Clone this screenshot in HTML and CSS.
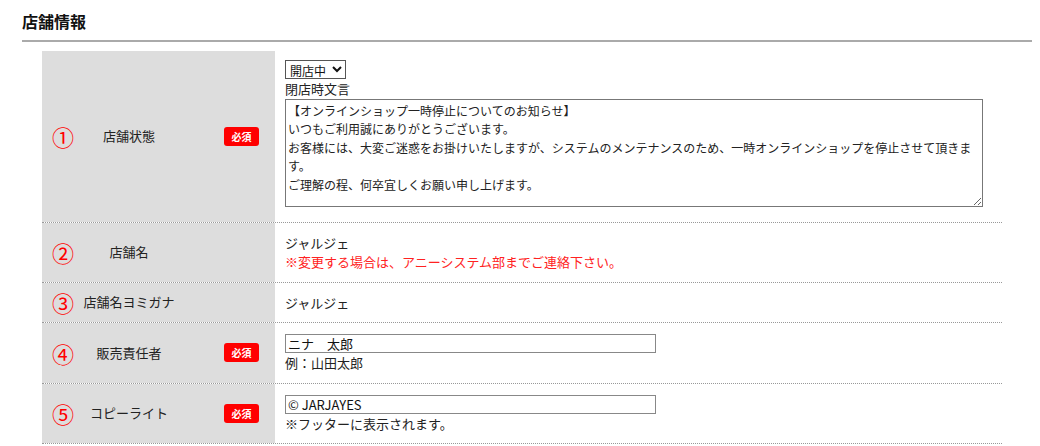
FILE: index.html
```html
<!DOCTYPE html>
<html lang="ja">
<head>
<meta charset="utf-8">
<title>店舗情報</title>
<link rel="stylesheet" href="styles.css">
</head>
<body>
<div class="section">
  <h2 class="title">店舗情報</h2>
  <div class="form">
    <div class="row">
      <div class="head"><span class="num">①</span><span class="label">店舗状態</span><span class="req">必須</span></div>
      <div class="body">
        <select class="sel"><option>開店中</option><option>閉店中</option></select>
        <div class="line">閉店時文言</div>
        <textarea class="ta">【オンラインショップ一時停止についてのお知らせ】
いつもご利用誠にありがとうございます。
お客様には、大変ご迷惑をお掛けいたしますが、システムのメンテナンスのため、一時オンラインショップを停止させて頂きます。
ご理解の程、何卒宜しくお願い申し上げます。</textarea>
      </div>
    </div>
    <div class="row">
      <div class="head"><span class="num">②</span><span class="label">店舗名</span></div>
      <div class="body">
        <div class="line">ジャルジェ</div>
        <div class="line red">※変更する場合は、アニーシステム部までご連絡下さい。</div>
      </div>
    </div>
    <div class="row">
      <div class="head"><span class="num">③</span><span class="label">店舗名ヨミガナ</span></div>
      <div class="body">
        <div class="line">ジャルジェ</div>
      </div>
    </div>
    <div class="row">
      <div class="head"><span class="num">④</span><span class="label">販売責任者</span><span class="req">必須</span></div>
      <div class="body">
        <input class="inp" type="text" value="ニナ　太郎">
        <div class="line">例：山田太郎</div>
      </div>
    </div>
    <div class="row">
      <div class="head"><span class="num">⑤</span><span class="label">コピーライト</span><span class="req">必須</span></div>
      <div class="body">
        <input class="inp" type="text" value="© JARJAYES">
        <div class="line">※フッターに表示されます。</div>
      </div>
    </div>
  </div>
</div>
</body>
</html>
```
FILE: styles.css
```css
* { box-sizing: border-box; }
html, body { margin: 0; padding: 0; background: #fff; }
body {
  font-family: "Noto Sans CJK JP", "Noto Sans", sans-serif;
  font-size: 13px;
  color: #222;
}
.section { margin: 0 8px 0 22px; padding-top: 10px; }
.title {
  margin: 0;
  font-size: 16px;
  font-weight: bold;
  line-height: 23px;
  padding-bottom: 7px;
  border-bottom: 2px solid #aaa;
  color: #111;
}
.form { margin: 9px 0 0 20px; width: 960px; }
.row { display: flex; border-bottom: 1px dotted #999; }
.head {
  width: 233px;
  flex: none;
  background: #ddd;
  display: flex;
  align-items: center;
  padding-left: 10px;
}
.num { width: 28px; flex: none; font-size: 22px; line-height: 24px; color: #f00; }
.label { width: 98px; flex: none; text-align: center; line-height: 20px; color: #222; }
.req {
  margin-left: 46px;
  width: 35px;
  height: 19px;
  background: #f00;
  border-radius: 3px;
  color: #fff;
  font-size: 10px;
  font-weight: bold;
  line-height: 19px;
  text-align: center;
}
.body { flex: 1; padding: 10px; }
.line { line-height: 19.5px; }
.red { color: #f22; }
.sel {
  display: block;
  width: 61px;
  height: 19px;
  margin: -1px 0 0 0;
  padding: 0;
  font-family: inherit;
  font-size: 12px;
  color: #111;
  border: 1px solid #555;
  border-radius: 0;
  background: #fff;
}
.ta {
  display: block;
  width: 698px;
  height: 108px;
  margin: 0 0 5px 0;
  padding: 2px 2px;
  border: 1px solid #777;
  font-family: inherit;
  font-size: 12px;
  line-height: 18.5px;
  color: #222;
  resize: both;
}
.inp {
  display: block;
  width: 371px;
  height: 19px;
  margin: 1px 0 0 0;
  padding: 0 2px;
  border: 1px solid #888;
  font-family: inherit;
  font-size: 13px;
  color: #111;
}
```
